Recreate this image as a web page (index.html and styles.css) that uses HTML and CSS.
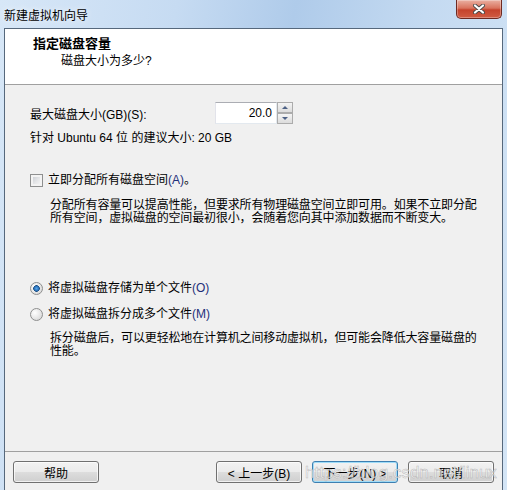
FILE: index.html
```html
<!DOCTYPE html>
<html lang="zh-CN">
<head>
    <meta charset="UTF-8">
    <meta name="viewport" content="width=device-width, initial-scale=1.0">
    <title>新建虚拟机向导</title>
    <link rel="stylesheet" href="styles.css">
</head>
<body>
    <div class="window">
        <div class="titlebar">
            <span class="title">新建虚拟机向导</span>
            <button type="button" class="close" aria-label="关闭">
                <svg width="12" height="10" viewBox="0 0 12 10">
                    <path d="M2 1.5 L10 8.5 M10 1.5 L2 8.5" stroke="#4a4a4a" stroke-width="4" stroke-linecap="round"/>
                    <path d="M2 1.5 L10 8.5 M10 1.5 L2 8.5" stroke="#ffffff" stroke-width="2.2" stroke-linecap="round"/>
                </svg>
            </button>
        </div>
        <div class="client">
            <div class="header">
                <h1>指定磁盘容量</h1>
                <p>磁盘大小为多少?</p>
            </div>
            <div class="content">
                <div class="size-row">
                    <label for="diskSize">最大磁盘大小(GB)(S):</label>
                    <div class="spin">
                        <input type="text" id="diskSize" value="20.0">
                        <div class="spin-buttons">
                            <button type="button" class="up"></button>
                            <button type="button" class="down"></button>
                        </div>
                    </div>
                </div>
                <p class="hint">针对 Ubuntu 64 位 的建议大小: 20 GB</p>
                <label class="option check-option"><input type="checkbox"><span>立即分配所有磁盘空间<span class="key">(A)</span>。</span></label>
                <p class="desc">分配所有容量可以提高性能，但要求所有物理磁盘空间立即可用。如果不立即分配<br>所有空间，虚拟磁盘的空间最初很小，会随着您向其中添加数据而不断变大。</p>
                <label class="option radio-single"><input type="radio" name="split" checked><span>将虚拟磁盘存储为单个文件<span class="key">(O)</span></span></label>
                <label class="option radio-multi"><input type="radio" name="split"><span>将虚拟磁盘拆分成多个文件<span class="key">(M)</span></span></label>
                <p class="desc desc-split">拆分磁盘后，可以更轻松地在计算机之间移动虚拟机，但可能会降低大容量磁盘的<br>性能。</p>
            </div>
            <div class="footer">
                <button type="button">帮助</button>
                <div class="nav">
                    <button type="button">&lt; 上一步(B)</button>
                    <button type="button" class="default">下一步(N) &gt;</button>
                    <button type="button">取消</button>
                </div>
                <span class="watermark">https://blog.csdn.net/linux</span>
            </div>
        </div>
    </div>
</body>
</html>
```

FILE: styles.css
```css
body {
    margin: 0;
    font-family: "Liberation Sans", "Noto Sans CJK SC", sans-serif;
    font-size: 12px;
    color: #000;
}
.window {
    width: 507px;
    height: 490px;
    box-sizing: border-box;
    padding: 0 4px;
    display: flex;
    flex-direction: column;
    background: linear-gradient(100deg, #d7e7f7 0%, #c6dbf2 30%, #afcbea 50%, #c4daf1 72%, #d4e5f6 100%);
}
.titlebar {
    height: 28px;
    display: flex;
    align-items: center;
}
.title {
    margin-top: 3px;
    line-height: 14px;
    text-shadow: 0 0 6px #ffffff;
}
.close {
    margin-left: auto;
    margin-right: 1px;
    align-self: flex-start;
    width: 46px;
    height: 19px;
    padding: 0;
    border: 1px solid #6e2a22;
    border-top: none;
    border-radius: 0 0 5px 5px;
    background: linear-gradient(to bottom, #eab0a2 0%, #d9735d 45%, #c5432c 55%, #d15c43 100%);
    box-shadow: inset 0 0 0 1px rgba(255, 255, 255, 0.3);
    display: flex;
    align-items: center;
    justify-content: center;
}
.client {
    flex: 1;
    min-height: 0;
    display: flex;
    flex-direction: column;
    border: 1px solid #56687c;
    border-bottom: none;
    background: #f0f0f0;
}
.header {
    height: 56px;
    box-sizing: border-box;
    padding: 8px 0 0 28px;
    background: #ffffff;
    border-bottom: 1px solid #a0a0a0;
}
.header h1 {
    margin: 0;
    font-size: 13px;
    font-weight: bold;
    line-height: 14px;
}
.header p {
    margin: 3px 0 0 28px;
    line-height: 14px;
}
.content {
    flex: 1;
    padding: 17px 10px 0 25px;
}
.size-row {
    display: flex;
    align-items: center;
    height: 22px;
}
.size-row label {
    width: 185px;
}
.spin {
    display: flex;
    height: 22px;
}
.spin input {
    width: 62px;
    height: 22px;
    box-sizing: border-box;
    padding: 0 4px 0 0;
    border: 1px solid #abadb3;
    border-color: #abadb3 #e3e9ef #e3e9ef #e2e3ea;
    background: #ffffff;
    font: inherit;
    text-align: right;
    outline: none;
}
.spin-buttons {
    display: flex;
    flex-direction: column;
    width: 16px;
}
.spin-buttons button {
    height: 11px;
    padding: 0;
    border: 1px solid #acacac;
    background: linear-gradient(to bottom, #f4f4f4, #dcdcdc);
    display: flex;
    align-items: center;
    justify-content: center;
}
.spin-buttons button::after {
    content: "";
    border-left: 3px solid transparent;
    border-right: 3px solid transparent;
}
.spin-buttons .up::after {
    border-bottom: 3px solid #4d6185;
}
.spin-buttons .down::after {
    border-top: 3px solid #4d6185;
}
.hint {
    margin: 7px 0 0;
    line-height: 14px;
}
.option {
    display: flex;
    align-items: center;
    gap: 5px;
    line-height: 14px;
}
.option input {
    appearance: none;
    -webkit-appearance: none;
    width: 13px;
    height: 13px;
    margin: 0;
    border: 1px solid #8e8f8f;
    box-sizing: border-box;
}
.option input[type="checkbox"] {
    background: linear-gradient(135deg, #c3c7cd 0%, #e6e7e9 55%, #fbfbfb 100%);
    box-shadow: inset 0 0 0 2px #f3f3f3;
}
.option input[type="radio"] {
    border-radius: 50%;
    background: radial-gradient(circle at 35% 35%, #ffffff 0%, #e4e4e4 60%, #cfcfcf 100%);
}
.option input[type="radio"]:checked {
    background:
        radial-gradient(circle, #5aa8ec 0, #2d78c2 2px, #1d4f84 3px, transparent 3.6px),
        radial-gradient(circle at 35% 35%, #ffffff 0%, #e4e4e4 60%, #cfcfcf 100%);
}
.key {
    color: #1e2f7a;
}
.check-option {
    margin-top: 28px;
}
.desc {
    margin: 12px 0 0 20px;
    line-height: 13px;
    letter-spacing: -0.15px;
    white-space: nowrap;
}
.radio-single {
    margin-top: 56px;
}
.radio-multi {
    margin-top: 12px;
}
.desc-split {
    margin-top: 11px;
}
.footer {
    position: relative;
    display: flex;
    align-items: center;
    padding: 9px 8px 7px;
    border-top: 1px solid #a0a0a0;
}
.footer button {
    width: 86px;
    height: 22px;
    padding: 0;
    border: 1px solid #707070;
    border-radius: 3px;
    background: linear-gradient(to bottom, #f2f2f2 0%, #ebebeb 50%, #dddddd 50%, #cfcfcf 100%);
    box-shadow: inset 0 0 0 1px rgba(255, 255, 255, 0.7);
    font: inherit;
    color: #000;
}
.footer .default {
    border-color: #3c7fb1;
    box-shadow: inset 0 0 0 1px #9fdcf8;
}
.nav {
    margin-left: auto;
    display: flex;
    gap: 10px;
}
.watermark {
    position: absolute;
    left: 300px;
    top: 11px;
    font-family: "Liberation Sans", sans-serif;
    font-size: 17px;
    line-height: 20px;
    color: rgba(255, 255, 255, 0.65);
    -webkit-text-stroke: 0.5px rgba(140, 140, 140, 0.6);
    pointer-events: none;
}
```
